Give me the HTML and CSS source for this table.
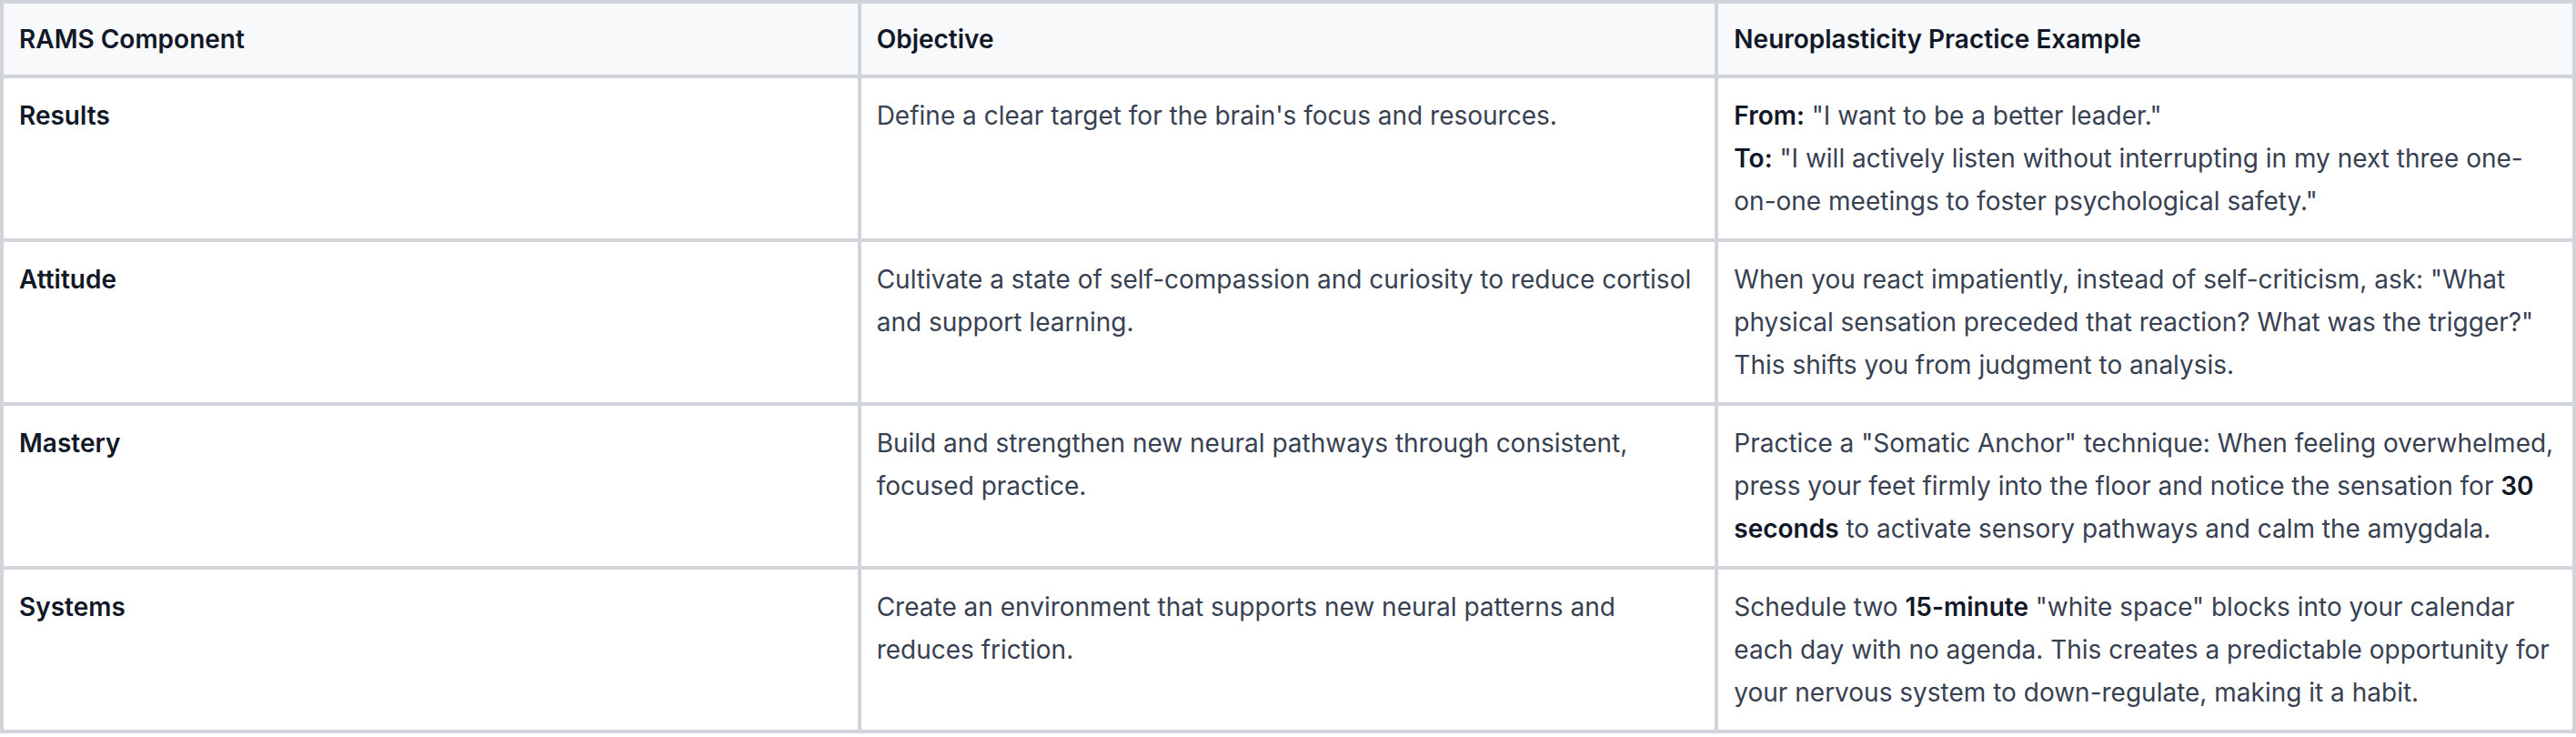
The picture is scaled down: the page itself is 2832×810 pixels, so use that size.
FILE: index.html
```html
<!DOCTYPE html>
<html lang="en">
<head>
<meta charset="utf-8">
<title>RAMS Neuroplasticity Table</title>
<link rel="stylesheet" href="styles.css">
</head>
<body>
<table class="rams">
  <colgroup>
    <col class="col">
    <col class="col">
    <col class="col">
  </colgroup>
  <thead>
    <tr>
      <th>RAMS Component</th>
      <th>Objective</th>
      <th>Neuroplasticity Practice Example</th>
    </tr>
  </thead>
  <tbody>
    <tr>
      <td class="name">Results</td>
      <td>Define a clear target for the brain's focus and resources.</td>
      <td><strong>From:</strong> "I want to be a better leader."<br><strong>To:</strong> "I will actively listen without interrupting in my next three one-on-one meetings to foster psychological safety."</td>
    </tr>
    <tr>
      <td class="name">Attitude</td>
      <td>Cultivate a state of self-compassion and curiosity to reduce cortisol and support learning.</td>
      <td>When you react impatiently, instead of self-criticism, ask: "What physical sensation preceded that reaction? What was the trigger?" This shifts you from judgment to analysis.</td>
    </tr>
    <tr>
      <td class="name">Mastery</td>
      <td>Build and strengthen new neural pathways through consistent, focused practice.</td>
      <td>Practice a "Somatic Anchor" technique: When feeling overwhelmed, press your feet firmly into the floor and notice the sensation for <strong>30 seconds</strong> to activate sensory pathways and calm the amygdala.</td>
    </tr>
    <tr>
      <td class="name">Systems</td>
      <td>Create an environment that supports new neural patterns and reduces friction.</td>
      <td>Schedule two <strong>15-minute</strong> "white space" blocks into your calendar each day with no agenda. This creates a predictable opportunity for your nervous system to down-regulate, making it a habit.</td>
    </tr>
  </tbody>
</table>
</body>
</html>
```

FILE: styles.css
```css
html, body {
  margin: 0;
  padding: 0;
  background: #ffffff;
}

body {
  font-family: Inter, "Noto Sans", "Liberation Sans", sans-serif;
  color: #374151;
}

.rams {
  width: 2832px;
  table-layout: fixed;
  border-collapse: separate;
  border-spacing: 0;
  border-left: 4px solid #d1d5db;
  border-top: 4px solid #d1d5db;
}

.rams th,
.rams td {
  border-right: 4px solid #d1d5db;
  border-bottom: 4px solid #d1d5db;
  text-align: left;
  vertical-align: top;
  font-size: 28px;
}

.rams th {
  background: #f8f9fb;
  color: #111827;
  font-weight: 600;
  line-height: 44px;
  padding: 17px 17px;
}

.rams td {
  line-height: 47px;
  padding: 18px 17px 17px;
}

.rams td.name {
  color: #111827;
  font-weight: 600;
}

.rams strong {
  color: #111827;
  font-weight: 600;
}
```
